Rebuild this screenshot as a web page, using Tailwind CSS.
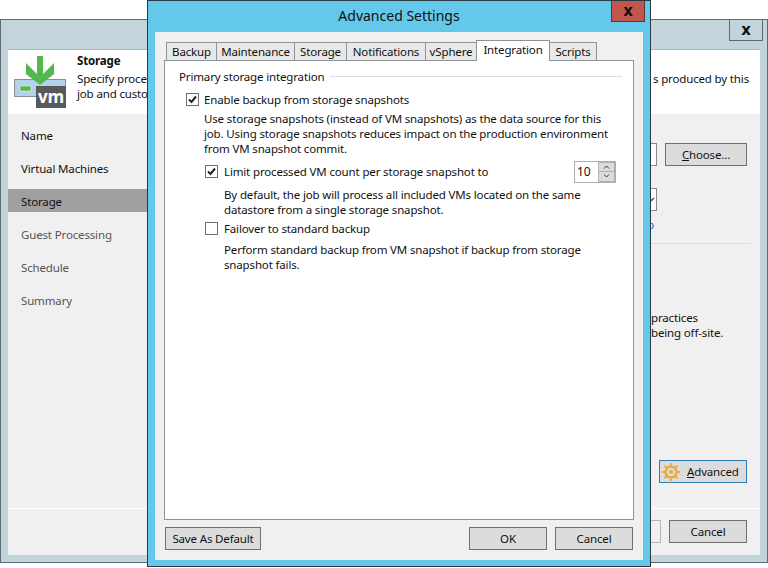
<!DOCTYPE html>
<html lang="en">
<head>
    <meta charset="UTF-8">
    <title>Advanced Settings</title>
    <script src="https://cdn.jsdelivr.net/npm/@tailwindcss/browser@4"></script>
</head>
<body class="bg-white text-[11.5px] tracking-[-0.15px] leading-[15px] text-[#111] font-['Noto_Sans',sans-serif] overflow-hidden">
<div class="relative w-[768px] h-[568px] overflow-hidden">

    <!-- Back window: New Backup Job wizard -->
    <div class="absolute left-0 top-[19px] w-[768px] h-[544px] flex flex-col bg-[#c3d5dc] border border-[#5f6a70]">
        <div class="h-[29px] flex justify-end pr-[4px] shrink-0">
            <div class="w-[34px] h-[21px] flex items-center justify-center border border-t-0 border-[#5f6a70] font-bold text-[15px] font-['DejaVu_Sans',sans-serif]">x</div>
        </div>
        <div class="mx-[7px] mb-[7px] flex-1 flex flex-col bg-[#f0f0f0] border-t border-[#a9b8bf]">
            <!-- Header -->
            <div class="h-[64px] bg-white flex shrink-0">
                <svg class="w-[69px] h-[64px] shrink-0" viewBox="0 0 69 64">
                    <rect x="6.500" y="29.500" width="51" height="17" fill="#b5d2ec" stroke="#8b8f92"/>
                    <rect x="12" y="36" width="11" height="5" fill="#55b84c" stroke="#fff" stroke-width="0.500"/>
                    <path d="M29 6h6v18l11-11v11L32 35 18 24V13l11 11z" fill="#55b84c"/>
                    <rect x="28" y="36" width="30" height="22" fill="#595959"/>
                    <text x="43" y="53" text-anchor="middle" fill="#fff" font-size="17" font-weight="700" font-family="Open Sans, sans-serif">vm</text>
                </svg>
                <div class="flex-1 pt-[3px] pr-[11px]">
                    <div class="font-bold">Storage</div>
                    <div class="flex justify-between mt-[3px]"><span>Specify proce</span><span>s produced by this</span></div>
                    <div>job and custo</div>
                </div>
            </div>
            <div class="flex-1 flex">
                <!-- Steps -->
                <div class="w-[140px] shrink-0 pt-[4px]">
                    <div class="h-[33px] pl-[13px] pt-[2px] flex items-center">Name</div>
                    <div class="h-[33px] pl-[13px] pt-[2px] flex items-center">Virtual Machines</div>
                    <div class="h-[23px] my-[5px] pl-[13px] pt-[2px] flex items-center bg-[#a0a0a0]">Storage</div>
                    <div class="h-[33px] pl-[13px] pt-[2px] flex items-center text-[#555]">Guest Processing</div>
                    <div class="h-[33px] pl-[13px] pt-[2px] flex items-center text-[#555]">Schedule</div>
                    <div class="h-[33px] pl-[13px] pt-[2px] flex items-center text-[#555]">Summary</div>
                </div>
                <!-- Right pane, mostly behind the dialog -->
                <div class="flex-1 flex flex-col items-end pr-[9px] pt-[29px]">
                    <div class="flex gap-[8px] mr-[4px]">
                        <div class="w-[120px] h-[23px] bg-white border border-[#8a8a8a]"></div>
                        <button class="w-[82px] h-[23px] bg-[#dcdcdc] border border-[#707070]"><span class="underline">C</span>hoose...</button>
                    </div>
                    <div class="mr-[94px] mt-[22px] w-[120px] h-[23px] bg-white border border-[#8a8a8a] flex items-center justify-end pr-[1px]">
                        <svg class="w-[7px] h-[5px]" viewBox="0 0 7 5"><path d="M1 1l2.500 2.500L6 1" fill="none" stroke="#555" stroke-width="1.500"/></svg>
                    </div>
                    <div class="self-stretch h-[15px] mt-[6px] text-right pr-[97px] text-[#0066dd]">o</div>
                    <div class="self-stretch mt-[11px] h-px bg-[#d5dfe5]"></div>
                    <div class="self-stretch mt-[66px] pl-[503px]">
                        <div>practices</div>
                        <div>being off-site.</div>
                    </div>
                    <div class="flex-1"></div>
                    <button class="w-[88px] h-[23px] mr-[4px] mb-[25px] bg-[#dcdcdc] border border-[#2e7db5] flex items-center">
                        <svg class="w-[18px] h-[18px] ml-[2px]" viewBox="0 0 18 18">
                            <circle cx="9" cy="9" r="5.500" fill="none" stroke="#e6ac3c" stroke-width="2.500"/>
                            <circle cx="9" cy="9" r="2" fill="#e6ac3c"/>
                            <path d="M9 0v3M9 15v3M0 9h3M15 9h3M2.600 2.600l2.100 2.100M13.300 13.300l2.100 2.100M2.600 15.400l2.100-2.100M13.300 4.700l2.100-2.100" stroke="#e6ac3c" stroke-width="2"/>
                        </svg>
                        <span class="ml-[7px]"><span class="underline">A</span>dvanced</span>
                    </button>
                </div>
            </div>
            <!-- Footer -->
            <div class="h-[47px] shrink-0 border-t border-white flex justify-end items-start gap-[8px] pt-[11px] pr-[13px]">
                <button class="w-[78px] h-[23px] bg-[#f0f0f0] border border-[#b5b5b5]"></button>
                <button class="w-[78px] h-[23px] bg-[#dcdcdc] border border-[#707070]">Cancel</button>
            </div>
        </div>
    </div>

    <!-- Front dialog -->
    <div class="absolute left-[147px] top-0 w-[504px] h-[567px] flex flex-col bg-[#64c8ea] border border-[#2b3a42]">
        <div class="h-[30px] shrink-0 flex relative">
            <div class="flex-1 text-center text-[14px] tracking-normal leading-[30px]">Advanced Settings</div>
            <div class="absolute right-[5px] top-0 w-[34px] h-[21px] flex items-center justify-center bg-[#c0574f] border border-t-0 border-[#5a3a38] font-bold text-[15px] font-['DejaVu_Sans',sans-serif]">x</div>
        </div>
        <div class="mx-[7px] mb-[6px] flex-1 flex flex-col bg-[#f0f0f0] border-t border-[#9fb0ba] px-[9px] pt-[8px] pb-[10px]">
            <!-- Tabs -->
            <div class="h-[21px] flex items-end pl-[2px] shrink-0 relative z-10 -mb-px">
                <div class="h-[19px] w-[51px] text-center leading-[18px] bg-[#e8e8e8] border border-[#8e939a]">Backup</div>
                <div class="h-[19px] w-[78px] text-center leading-[18px] bg-[#e8e8e8] border border-l-0 border-[#8e939a]">Maintenance</div>
                <div class="h-[19px] w-[52px] text-center leading-[18px] bg-[#e8e8e8] border border-l-0 border-[#8e939a]">Storage</div>
                <div class="h-[19px] w-[79px] text-center leading-[18px] bg-[#e8e8e8] border border-l-0 border-[#8e939a]">Notifications</div>
                <div class="h-[19px] w-[51px] text-center leading-[18px] bg-[#e8e8e8] border border-l-0 border-[#8e939a]">vSphere</div>
                <div class="h-[21px] w-[74px] text-center leading-[18px] bg-white border border-b-0 border-[#8e939a] -ml-px relative z-10">Integration</div>
                <div class="h-[19px] w-[47px] text-center leading-[18px] bg-[#e8e8e8] border border-l-0 border-[#8e939a]">Scripts</div>
            </div>
            <!-- Integration tab -->
            <div class="flex-1 bg-white border border-[#8e939a] pl-[14px] pr-[11px] pt-[8px] whitespace-nowrap">
                <div class="flex items-center gap-[5px]">
                    <span>Primary storage integration</span>
                    <div class="flex-1 h-px bg-[#d5dfe5]"></div>
                </div>
                <div class="pl-[7px] mt-[8px]">
                    <label class="flex items-center gap-[5px] h-[15px]">
                        <span class="w-[13px] h-[13px] border border-[#707070] flex items-center justify-center">
                            <svg class="w-[9px] h-[9px]" viewBox="0 0 9 9"><path d="M1 4.500l2.500 2.500L8 1.500" fill="none" stroke="#222" stroke-width="2"/></svg>
                        </span>
                        <span>Enable backup from storage snapshots</span>
                    </label>
                    <div class="pl-[18px] mt-[4px]">
                        <p>Use storage snapshots (instead of VM snapshots) as the data source for this</p>
                        <p>job. Using storage snapshots reduces impact on the production environment</p>
                        <p>from VM snapshot commit.</p>
                    </div>
                    <div class="pl-[19px] mt-[4px]">
                        <div class="flex items-center justify-between h-[23px] mr-[6px]">
                            <label class="flex items-center gap-[6px]">
                                <span class="w-[13px] h-[13px] border border-[#707070] flex items-center justify-center">
                                    <svg class="w-[9px] h-[9px]" viewBox="0 0 9 9"><path d="M1 4.500l2.500 2.500L8 1.500" fill="none" stroke="#222" stroke-width="2"/></svg>
                                </span>
                                <span>Limit processed VM count per storage snapshot to</span>
                            </label>
                            <div class="w-[42px] h-[22px] flex border border-[#b0b0b0]">
                                <span class="flex-1 pl-[2px] text-[12px] leading-[20px]">10</span>
                                <div class="w-[17px] flex flex-col">
                                    <div class="flex-1 bg-[#dcdcdc] border border-[#b0b0b0] flex items-center justify-center"><svg class="w-[7px] h-[4px]" viewBox="0 0 7 4"><path d="M1 3.500L3.500 1 6 3.500" fill="none" stroke="#333"/></svg></div>
                                    <div class="flex-1 bg-[#dcdcdc] border border-t-0 border-[#b0b0b0] flex items-center justify-center"><svg class="w-[7px] h-[4px]" viewBox="0 0 7 4"><path d="M1 .5L3.500 3 6 .5" fill="none" stroke="#333"/></svg></div>
                                </div>
                            </div>
                        </div>
                        <div class="pl-[19px] mt-[4px]">
                            <p>By default, the job will process all included VMs located on the same</p>
                            <p>datastore from a single storage snapshot.</p>
                        </div>
                    </div>
                    <label class="flex items-center gap-[6px] h-[15px] pl-[19px] mt-[4px]">
                        <span class="w-[13px] h-[13px] border border-[#707070]"></span>
                        <span>Failover to standard backup</span>
                    </label>
                    <div class="pl-[38px] mt-[6px]">
                        <p>Perform standard backup from VM snapshot if backup from storage</p>
                        <p>snapshot fails.</p>
                    </div>
                </div>
            </div>
            <!-- Buttons -->
            <div class="mt-[7px] h-[23px] shrink-0 flex px-px">
                <button class="w-[96px] h-[23px] bg-[#dcdcdc] border border-[#707070]">Save As Default</button>
                <div class="flex-1"></div>
                <button class="w-[78px] h-[23px] bg-[#dcdcdc] border border-[#707070]">OK</button>
                <button class="w-[78px] h-[23px] ml-[8px] bg-[#dcdcdc] border border-[#707070]">Cancel</button>
            </div>
        </div>
    </div>
</div>
</body>
</html>
